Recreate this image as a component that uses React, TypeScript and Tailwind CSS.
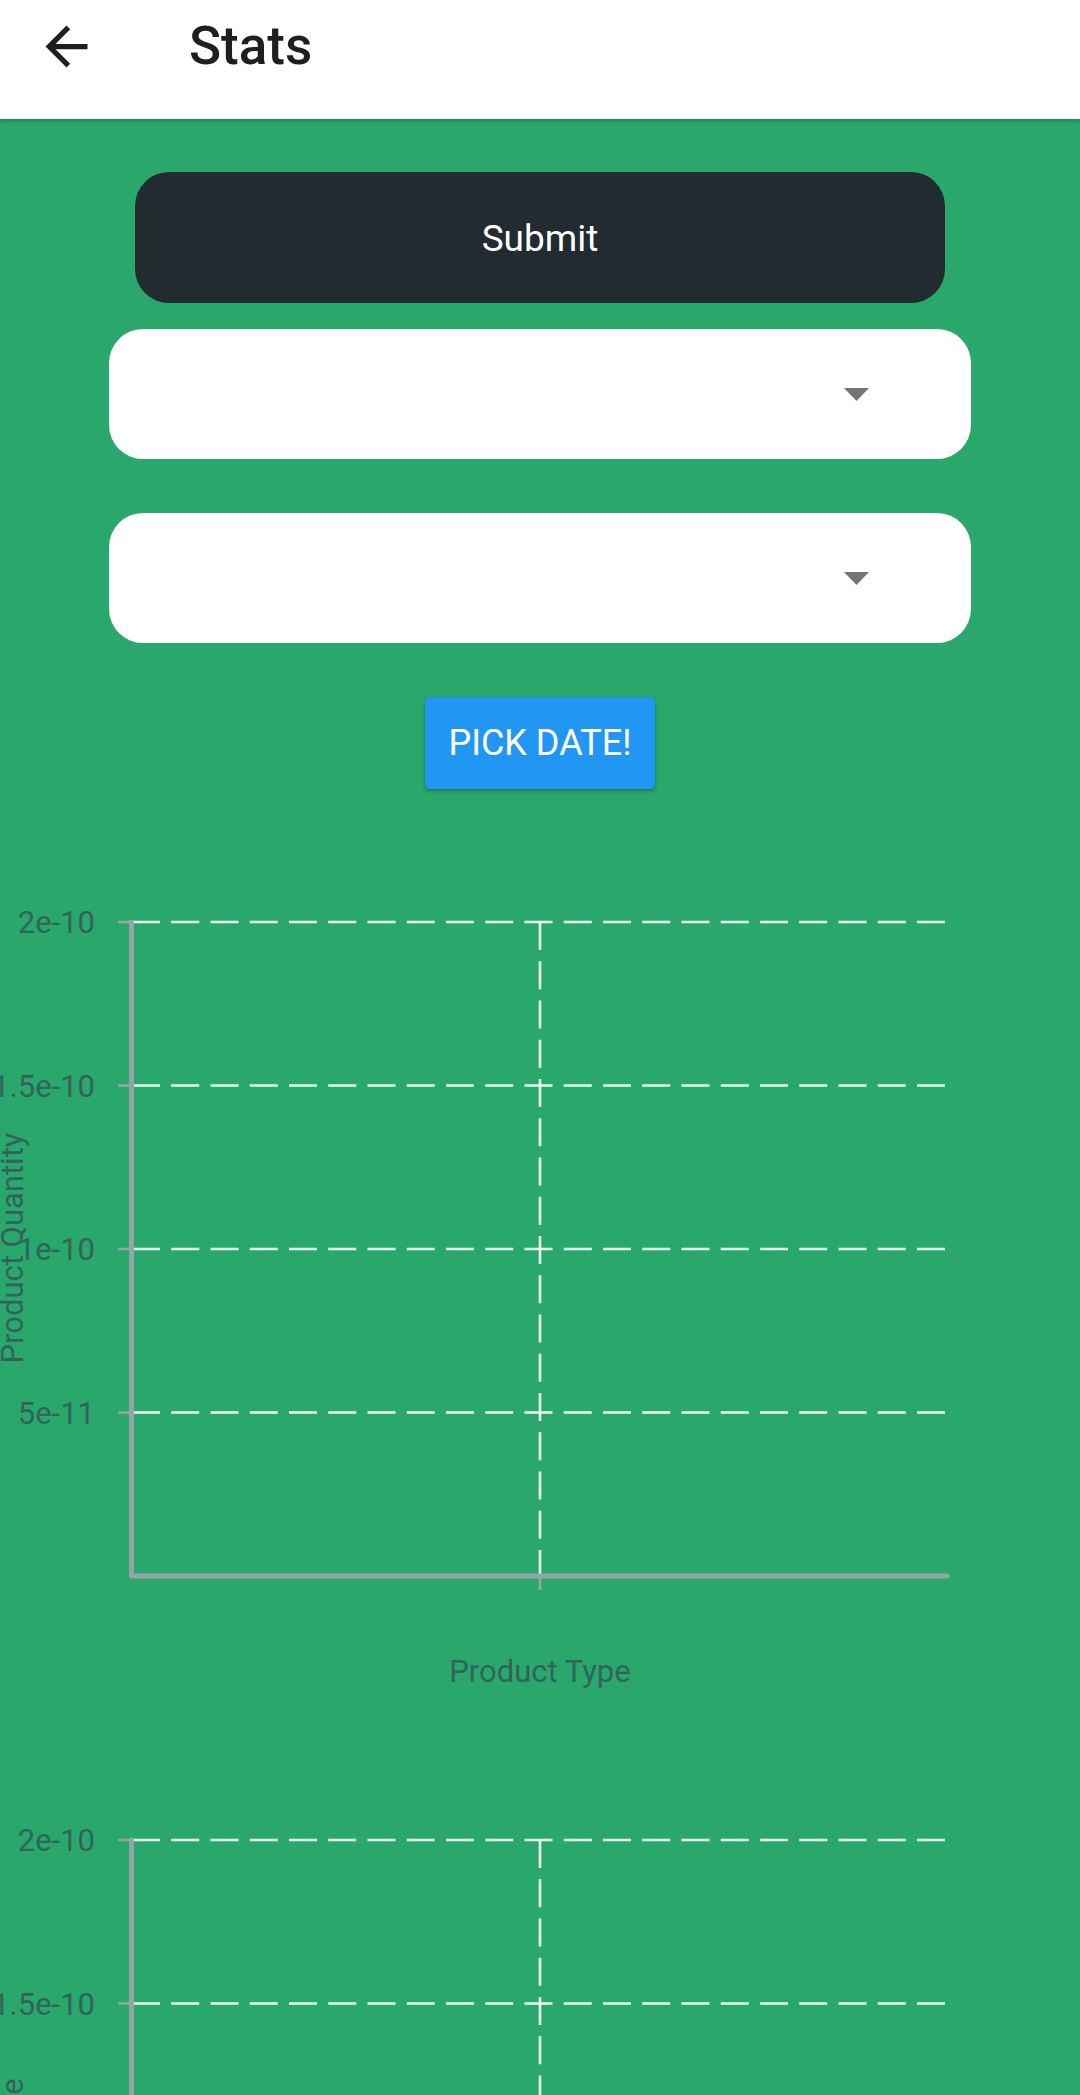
import React from "react"

const FONT = "font-['Roboto','Liberation_Sans',sans-serif]"

function BackArrow() {
    return (
        <svg width="63" height="63" viewBox="0 0 24 24" fill="#1f1f1f">
            <path d="M20 11H7.83l5.59-5.59L12 4l-8 8 8 8 1.41-1.41L7.83 13H20v-2z" />
        </svg>
    )
}

function Dropdown() {
    return (
        <div className="w-[862px] h-[130px] bg-white rounded-[34px] flex items-center justify-end pr-[102px]">
            <svg width="25" height="13" viewBox="0 0 25 13">
                <polygon points="0,0 25,0 12.5,13" fill="#757575" />
            </svg>
        </div>
    )
}

const GRID = [42, 205.5, 369, 532.5]
const LABELS = ["2e-10", "1.5e-10", "1e-10", "5e-11"]

function Chart({ yLabel, xLabel }: { yLabel: string; xLabel: string }) {
    const axis = "#93a5a6"
    const text = "#31645c"
    return (
        <svg width="1080" height="918" className="block shrink-0">
            {GRID.map((y) => (
                <line key={y} x1="132" x2="947" y1={y} y2={y} stroke="#e8fff4" strokeWidth="2.6" strokeDasharray="28 11.25" />
            ))}
            <line x1="540" x2="540" y1="42" y2="696" stroke="#e8fff4" strokeWidth="2.6" strokeDasharray="28 11.25" />
            {GRID.map((y) => (
                <line key={"t" + y} x1="118" x2="132" y1={y} y2={y} stroke={axis} strokeWidth="2.6" />
            ))}
            <line x1="540" x2="540" y1="696" y2="710" stroke={axis} strokeWidth="2.6" />
            <path d="M131.5 42 V696 H947" fill="none" stroke={axis} strokeWidth="5" strokeLinecap="round" strokeLinejoin="round" />
            {GRID.map((y, i) => (
                <text key={"l" + y} x="95" y={y + 11} textAnchor="end" fontSize="31" fill={text} fontFamily="Roboto, sans-serif">
                    {LABELS[i]}
                </text>
            ))}
            <text x="540" y="802" textAnchor="middle" fontSize="31" fill={text} fontFamily="Roboto, sans-serif">
                {xLabel}
            </text>
            <text x="0" y="0" transform="translate(23 368) rotate(-90)" textAnchor="middle" fontSize="31" fill={text} fontFamily="Roboto, sans-serif">
                {yLabel}
            </text>
        </svg>
    )
}

function App(): React.ReactElement {
    return (
        <div className={`w-[1080px] h-[2095px] overflow-hidden bg-[#2aa86c] flex flex-col ${FONT}`}>
            <div className="h-[119px] shrink-0 bg-white shadow-[0_2px_5px_rgba(0,0,0,0.25)] relative z-10">
                <div className="h-[92px] flex items-center pl-[35px]">
                    <BackArrow />
                    <span className="ml-[91px] text-[53px] font-medium text-[#1f1f1f] leading-none">Stats</span>
                </div>
            </div>

            <div className="flex flex-col items-center">
                <button className="mt-[53px] w-[810px] h-[131px] rounded-[34px] bg-[#212b30] text-white text-[37px] pt-[3px] flex items-center justify-center">
                    Submit
                </button>
                <div className="mt-[26px]">
                    <Dropdown />
                </div>
                <div className="mt-[54px]">
                    <Dropdown />
                </div>
                <button className="mt-[54px] w-[230px] h-[92px] rounded-[5px] bg-[#2196f3] text-white text-[36px] font-normal shadow-[0_2px_4px_rgba(0,0,0,0.3)] flex items-center justify-center">
                    PICK DATE!
                </button>
            </div>

            <div className="mt-[91px] flex flex-col">
                <Chart yLabel="Product Quantity" xLabel="Product Type" />
                <Chart yLabel="Product Sale" xLabel="Product Type" />
            </div>
        </div>
    )
}

export default App
